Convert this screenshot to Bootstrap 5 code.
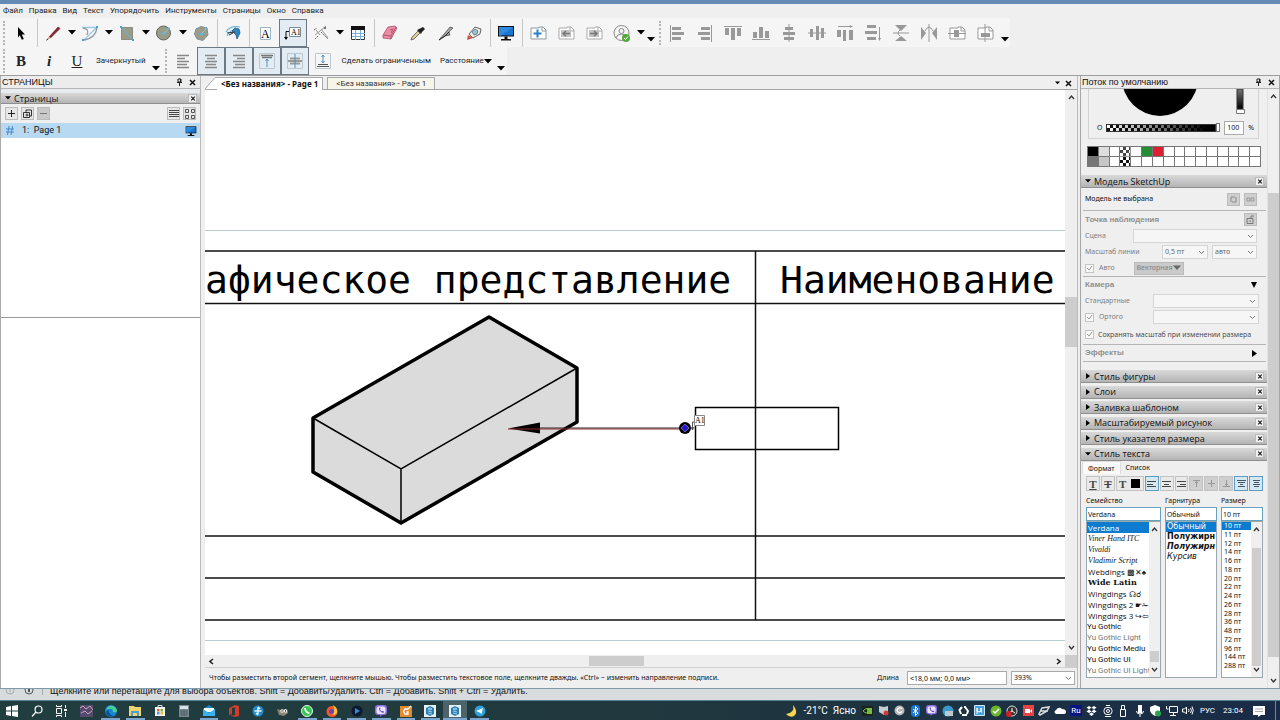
<!DOCTYPE html>
<html lang="ru">
<head>
<meta charset="utf-8">
<meta name="viewport" content="width=device-width, initial-scale=1">
<title>LayOut</title>
<link href="https://cdn.jsdelivr.net/npm/bootstrap@5.3.0/dist/css/bootstrap.min.css" rel="stylesheet">
<script src="https://cdn.jsdelivr.net/npm/bootstrap@5.3.0/dist/js/bootstrap.bundle.min.js" defer></script>
<style>
  :root { --ui: Roboto, "Noto Sans", sans-serif; --panel: "Liberation Sans", Arial, sans-serif; --small: "Noto Sans", "Open Sans", sans-serif; }
  body { font: 8px/12px var(--ui); color: #111; background: #efefef; }
  svg { display: block; flex: none; }
  button, input, select { font: inherit; color: inherit; }
  .app-top { height: 4px; background: #658ab5; }
  .menus { height: 14px; gap: 6px; padding-left: 3px; }
  .menus a { color: #222; text-decoration: none; }
  .tools { height: 28px; }
  .tools.first { height: 29px; }
  .strip { background: #f5f5f5; height: 100%; display: flex; align-items: center; }
  .grip { width: 2px; height: 24px; margin: 0 2px 0 3px; border-left: 2px dotted #b5b5b5; }
  .tool { width: 28px; height: 28px; padding: 0; border: 0; border-radius: 0; display: flex; align-items: center; justify-content: center; flex: none; --bs-btn-line-height: 1; }
  .tool.on { background: #e3ecf3; border: 1px solid #6c7884; }
  .drop { width: 9px; }
  .more { width: 11px; padding-top: 14px; }
  .word { width: auto; font: 8px/12px var(--ui); padding: 0 5px; }
  .vline { width: 1px; height: 28px; margin: 0 1px 0 2px; background: #c6c6c6; flex: none; }
  .serif { font: 15px/24px "Liberation Serif", serif; color: #222; }
  .work { border-top: 1px solid #9d9d9d; border-bottom: 1px solid #7e9bab; min-height: 0; }
  .left { width: 201px; border-right: 1px solid #bbb; border-left: 1px solid #aaa; background: #fff; }
  .right { width: 200px; border: 1px solid #a5a5a5; border-width: 0 1px; background: #efefef; }
  .cap { height: 13px; font: 9px/13px var(--panel); background: #ececec; border-bottom: 1px solid #b5b5b5; padding: 0 3px 0 1px; }
  .bar { height: 13px; font: 9px/13px "Open Sans", var(--panel); background: linear-gradient(#d9d9d9, #b4b4b4); border-bottom: 1px solid #8f8f8f; padding: 0 3px 0 4px; display: flex; align-items: center; gap: 3px; }
  .bar svg { width: 6px; }
  .bar .x { margin-left: auto; }
  .x { width: 9px; height: 9px; padding: 0; border: 1px solid #bbb; border-radius: 0; background: #efefef; display: flex; align-items: center; justify-content: center; }
  .bare { border: 0; background: none; padding: 0; width: 9px; height: 9px; display: flex; align-items: center; justify-content: center; }
  .mini { width: 13px; height: 13px; padding: 0; border: 1px solid #bbb; border-radius: 0; background: #e6e6e6; display: flex; align-items: center; justify-content: center; flex: none; }
  .pages { border-bottom: 1px solid #999; height: 195px; }
  .pagerow { background: #b7daf2; height: 15px; width: 100%; border: 0; font: 9px/15px var(--ui); padding: 0 3px 0 5px; text-align: left; }
  .tabs { height: 14px; border-bottom: 1px solid #a5a5a5; background: #efefef; }
  .tabs button { border: 1px solid #a9a9a9; border-bottom: 0; height: 12px; line-height: 12px; padding: 0 4px; background: #f5f5ea; color: #333; }
  .tabs button.on { background: #fff; font: 700 8px/12px "Noto Sans", var(--ui); color: #111; border-left: 0; margin-bottom: -1px; height: 13px; }
  .canvas { background: #fff; min-height: 0; overflow: hidden; }
  .canvas text { font: 38px "DejaVu Sans Mono", monospace; }
  .vbar { width: 12px; background: #efefef; display: flex; flex-direction: column; align-items: center; flex: none; }
  .thumb { background: #cdcdcd; }
  .hbar { height: 12px; background: #efefef; display: flex; align-items: center; }
  .hint { height: 21px; border-top: 1px solid #cfcfcf; font: 7px/20px var(--small); padding: 0 2px 0 4px; }
  .field { border: 1px solid #aaa; border-radius: 0; background-color: #fff; height: 14px; padding: 0 2px; min-width: 0; font: 7px/12px var(--small); appearance: none; }
  select.field { background: #fff url("data:image/svg+xml,%3Csvg xmlns='http://www.w3.org/2000/svg' width='7' height='5'%3E%3Cpath d='M1 1l2.500 2.500L6 1' fill='none' stroke='%23777'/%3E%3C/svg%3E") no-repeat right 2px center; }
  .dim select.field { border-color: #d5d5d5; background-color: #f6f6f6; color: #666; }
  .dim { color: #808080; }
  .dim b { font: 700 8px/12px var(--panel); color: #909090; }
  .tray-body { overflow: hidden; min-height: 0; font: 7px/12px var(--small); }
  .colorbox { height: 50px; margin: 0 8px 0 7px; border: 1px solid #d2d2d2; border-top: 0; }
  .check { background: repeating-conic-gradient(#111 0 25%, #fff 0 50%) 0 0/6px 6px; }
  .alpha { height: 8px; border: 1px solid #333; background: linear-gradient(90deg, transparent, #000 92%), repeating-conic-gradient(#111 0 25%, #fff 0 50%) 0 0/6px 6px; }
  .swatches { display: grid; grid-template-columns: repeat(16, 1fr); margin: 7px 6px 0 6px; border: 1px solid #777; border-width: 1px 0 0 1px; }
  .swatches i { height: 10px; border: 1px solid #777; border-width: 0 1px 1px 0; background-color: #fff; }
  .prop { display: flex; align-items: center; height: 16px; padding: 0 10px 0 4px; }
  .rule { border-top: 1px solid #b5b5b5; margin: 0 1px 0 2px; }
  .tick { appearance: none; width: 9px; height: 9px; margin: 0 5px 0 0; flex: none; border: 1px solid #c5c5c5; background: #f8f8f8 url("data:image/svg+xml,%3Csvg xmlns='http://www.w3.org/2000/svg' width='7' height='7'%3E%3Cpath d='M1 3l2 2 3-4' fill='none' stroke='%23999'/%3E%3C/svg%3E") center no-repeat; }
  .bars { height: 91px; }
  .sheet { margin: 0 4px 0 1px; }
  .sheet-tabs button { border: 0; background: none; height: 13px; line-height: 13px; padding: 0 5px; }
  .sheet-tabs button.on { background: #fafafa; border: 1px solid #ddd; border-bottom: 0; }
  .fmt { display: flex; gap: 1px; height: 15px; margin: 2px 0 0 4px; }
  .fmt button { width: 14px; height: 15px; padding: 0; border: 1px solid #c2c2c2; background: #e9e9e9; font: 700 11px/12px "Liberation Serif", serif; color: #444; display: flex; align-items: center; justify-content: center; }
  .fmt button.on { border-color: #5c9cc5; background: #d5e7f3; }
  .fmt button.off { background: #cfcfcf; color: #999; }
  .cols { display: grid; grid-template-columns: 75px 52px 42px; gap: 4px; margin-left: 4px; }
  .cols input { width: 100%; height: 14px; border-color: #66a3bb; padding: 0 1px; }
  .box { height: 157px; border: 1px solid #9aa7ad; background: #fff; overflow: hidden; display: flex; }
  .box ul { margin: 0; padding: 0; list-style: none; overflow: hidden; flex: 1; white-space: nowrap; }
  .fam li { height: 11px; font: 8px/11px "Open Sans", var(--ui); padding-left: 1px; overflow: hidden; }
  .fam li.yu { font-family: var(--ui); padding-left: 0; }
  .fam li.hand { font-family: "Liberation Serif", serif; font-style: italic; }
  .sty li { height: 10px; font: 8px/10px "DejaVu Sans", sans-serif; padding-left: 1px; }
  .siz { display: flex; flex-direction: column; justify-content: space-between; height: 148px; }
  .siz li { padding-left: 2px; line-height: 8px; }
  .box li.on { background: #0c7bd0; color: #fff; }
  .box .vbar { width: 11px; }
  .under { height: 11px; background: #d9dcde; overflow: hidden; font: 9px/11px var(--panel); white-space: nowrap; }
  .under p { margin: -3px 0 0; }
  .task { height: 20px; background: linear-gradient(90deg, #213e3f, #20383e 50%, #192b47); color: #fff; border-top: 1px solid #5b7f93; }
  .apps { display: grid; grid-template-columns: repeat(20, 1fr); width: 492px; }
  .apps button, .tray button { border: 0; background: none; padding: 0; display: flex; align-items: center; justify-content: center; color: #fff; }
  .apps button.run { box-shadow: inset 0 -2px #7ba4ce; margin: 0 3px; }
  .apps button.now { background: #4c6468; margin: 0; }
  .tray { font: 10px/18px var(--ui); }
  .tray button { width: 16px; }
  .clock { font-size: 8px; }
</style>
</head>
<body class="vh-100 d-flex flex-column overflow-hidden">
<svg width="0" height="0" class="position-absolute" aria-hidden="true">
  <defs>
    <symbol id="tri" viewBox="0 0 8 5"><path d="M0 0h8L4 4.500z"/></symbol>
    <symbol id="cross" viewBox="0 0 7 7"><path d="M1 1l5 5M6 1L1 6" stroke="#111" stroke-width="1.500"/></symbol>
    <symbol id="pin" viewBox="0 0 7 8"><path d="M2 1h3v3H2zM1 4.500h5M3.500 5v3M4.500 1v3" fill="none" stroke="#222"/></symbol>
    <symbol id="up" viewBox="0 0 7 7"><path d="M1 5l2.500-3L6 5" fill="none" stroke="#333" stroke-width="1.300"/></symbol>
    <symbol id="down" viewBox="0 0 7 7"><path d="M1 2l2.500 3L6 2" fill="none" stroke="#333" stroke-width="1.300"/></symbol>
    <symbol id="screen" viewBox="0 0 18 18"><path d="M1 2h16v10.500H1z" fill="#111"/><path d="M2 3h14v8.500H2z" fill="#1c74cc"/><path d="M2 3h14L4 11.500H2z" fill="#2f8ae0"/><path d="M7.500 12.500h3V15H14v1.500H4V15h3.500z" fill="#111"/></symbol>
    <symbol id="sheet" viewBox="0 0 18 18"><path d="M2 4h8v-1h4l3 3v9H2z" fill="#fff" stroke="currentColor"/><path d="M13 3v4h4" fill="none" stroke="currentColor"/></symbol>
    <symbol id="sk" viewBox="0 0 12 12"><path d="M0 0h12v12H0z" fill="#e6f1f8"/><path d="M6 1l4 2v6l-4 2-4-2V3z" fill="#2f7fb3"/><path d="M4 4l2-1 2 1-2 1zM4 6l4 1M4 8l4 1" stroke="#9cd0ee" fill="none"/></symbol>
    <symbol id="viber" viewBox="0 0 12 12"><path d="M3 0h6q3 0 3 3v4q0 3-3 3H7l-2 2v-2H3Q0 10 0 7V3q0-3 3-3z" fill="#8a6fe0"/><path d="M1.500 4q0-2.500 2.500-2.500h4q2.500 0 2.500 2.500v2.500Q10.500 9 8 9H4Q1.500 9 1.500 6.500z" fill="#e9e3fb"/><path d="M4 3q0 4 4.500 5l.5-1.500-1.500-.5-.5.5Q5.500 6 5 4.500l.5-.5-.5-1.500z" fill="#5b3fbd"/></symbol>
  </defs>
</svg>

<div class="app-top"></div>
<nav class="menus d-flex align-items-center" aria-label="Меню">
  <a href="#">Файл</a><a href="#">Правка</a><a href="#">Вид</a><a href="#">Текст</a><a href="#">Упорядочить</a><a href="#">Инструменты</a><a href="#">Страницы</a><a href="#">Окно</a><a href="#">Справка</a>
</nav>

<div class="tools first d-flex" role="toolbar" aria-label="Основные инструменты">
  <div class="strip">
    <span class="grip"></span>
    <button class="btn tool" aria-label="Выбор"><svg width="18" height="18"><path d="M6 3l7 7.500H9.800l2 4.500-2 .8-2-4.500L6 13.500z"/></svg></button>
    <span class="vline"></span>
    <button class="btn tool" aria-label="Линия"><svg width="18" height="18"><path d="M3 16l2-4 3 1.500z" fill="#caa27c"/><path d="M5.500 12.500L14 3l2 1.500-9 9z" fill="#8d2230" stroke="#5f1822" stroke-width=".6"/><path d="M2 17l1.200-2.500 1 .8z" fill="#222"/></svg></button>
    <button class="btn tool drop" aria-label="Виды линий"><svg width="8" height="5"><use href="#tri"/></svg></button>
    <button class="btn tool" aria-label="Дуга"><svg width="18" height="18" fill="none"><path d="M2 4L16 3Q16 14 3 16l2-4 4-1z" fill="#fafcfd"/><path d="M1 3.500h14M3 16L15 4" stroke="#9cc8e2" stroke-width="1.300"/><path d="M16 3Q15 14 3 16M2 4q7 1 4 7" stroke="#8b9aa3" stroke-width="1.300"/><path d="M1 15h2v2H1zM15 2h2v2h-2z" fill="#4ba0d4"/></svg></button>
    <button class="btn tool drop" aria-label="Виды дуг"><svg width="8" height="5"><use href="#tri"/></svg></button>
    <button class="btn tool" aria-label="Прямоугольник"><svg width="18" height="18"><path d="M3.500 3.500h11v12h-11z" fill="#9b9c88" stroke="#8b8d7e"/><path d="M4 3.500L14 15.500" stroke="#65b4e0"/><path d="M2 2h2v2H2zM14 15h2v2h-2z" fill="#4ba0d4"/></svg></button>
    <button class="btn tool drop" aria-label="Виды прямоугольников"><svg width="8" height="5"><use href="#tri"/></svg></button>
    <button class="btn tool" aria-label="Круг"><svg width="18" height="18"><circle cx="8.500" cy="9" r="7" fill="#9b9c88" stroke="#60686a"/><path d="M8.500 9.500L13.500 5" stroke="#8ccbea"/><path d="M7 8.500h3v2H7zM13 3.500h2v2h-2z" fill="#65b4e0"/></svg></button>
    <button class="btn tool drop" aria-label="Виды кругов"><svg width="8" height="5"><use href="#tri"/></svg></button>
    <button class="btn tool" aria-label="Многоугольник"><svg width="18" height="18"><path d="M4 5l5-2.500 6 1.500 1 7-5 5.500-6-1.500-2.500-5z" fill="#9b9c88" stroke="#7f8f9c"/><path d="M9 10l5-5" stroke="#8ccbea"/><path d="M8 9h3v2H8zM13 3h2v2h-2z" fill="#65b4e0"/></svg></button>
    <span class="vline"></span>
    <button class="btn tool" aria-label="Смещение"><svg width="18" height="18" fill="none"><path d="M2 8Q6 1 16 3M3 12Q6 6 11 6" stroke="#6fb4de" stroke-width="1.200"/><path d="M8 7l3-3 4 1 1 4-3 6-1-4z" fill="#2d86c2" stroke="#245a80" stroke-width=".8"/><path d="M3 9l8-1M5 11l4-2" stroke="#333"/></svg></button>
    <span class="vline"></span>
    <button class="btn tool" aria-label="Текст"><svg width="18" height="18"><path d="M4.500 3.500h10v12h-10z" fill="#fff" stroke="#9cb5c4"/><text x="5" y="14" font-size="12" font-family="Liberation Serif">A</text></svg></button>
    <button class="btn tool on" aria-label="Подпись"><svg width="18" height="18"><path d="M5.500 3.500h11v9h-11z" fill="#fff" stroke="#788b98"/><text x="7" y="11" font-size="8" font-family="Liberation Serif">A1</text><path d="M5 7.500H2V14" fill="none" stroke="#111"/><path d="M0 13h4l-2 3z"/></svg></button>
    <button class="btn tool" aria-label="Размер"><svg width="18" height="18" fill="none"><path d="M3 11L14 2M4 6l4 5M9 5l7 9" stroke="#999"/><path d="M2 6l3-2M6 12l-3 3M9 8l7 7" stroke="#666" stroke-dasharray="2 1"/><circle cx="13" cy="4" r="1.200" fill="#777"/></svg></button>
    <button class="btn tool drop" aria-label="Виды размеров"><svg width="8" height="5"><use href="#tri"/></svg></button>
    <button class="btn tool" aria-label="Таблица"><svg width="18" height="18"><path d="M2.500 2.500h13v13h-13z" fill="#fff" stroke="#333"/><path d="M2 2h14v4H2z" fill="#111"/><path d="M6.500 6v10M11.500 6v10M3 9.500h13M3 12.500h13" stroke="#77b0dc"/></svg></button>
    <span class="vline"></span>
    <button class="btn tool" aria-label="Ластик"><svg width="18" height="18"><path d="M7 3l7-1 2 2-6 11-8-1v-3z" fill="#ee8ca6" stroke="#98465c" stroke-width=".7"/><path d="M2 11l8 1 5-9M10 12v3M9 6l3-1-2 4" fill="none" stroke="#b65471"/></svg></button>
    <button class="btn tool" aria-label="Пипетка"><svg width="18" height="18"><path d="M2 16l1-3 6-6 2 2-6 6z" fill="#d8cf9a" stroke="#555" stroke-width=".8"/><path d="M8 6l4 4 1-2 3-3-2-2-4 2z" fill="#222"/></svg></button>
    <button class="btn tool" aria-label="Разделить"><svg width="18" height="18"><path d="M2 16L13 3l3 1-4 4 1 3-5 1z" fill="#a5a5a5" stroke="#444" stroke-width=".7"/><path d="M2 16l6-4 4-4" fill="none" stroke="#222"/></svg></button>
    <button class="btn tool" aria-label="Соединить"><svg width="18" height="18"><path d="M4 10l6-7 6 2-1 5-7 4z" fill="#f0e9dc" stroke="#444" stroke-width=".8"/><path d="M7 8l3-3 3 2-1 3-3 1z" fill="#8ec7dc" stroke="#567" stroke-width=".7"/><path d="M2 16l1-5 5 3z" fill="#c75340"/></svg></button>
    <span class="vline"></span>
    <button class="btn tool" aria-label="Презентация"><svg width="18" height="18"><use href="#screen"/></svg></button>
    <span class="vline"></span>
    <button class="btn tool" aria-label="Добавить страницу" style="color:#8d9aa2"><svg width="18" height="18"><use href="#sheet"/><path d="M8.500 5.500v8M4.500 9.500h8" stroke="#2b7fc9" stroke-width="2"/></svg></button>
    <button class="btn tool" aria-label="Предыдущая страница" style="color:#aaa"><svg width="18" height="18"><use href="#sheet"/><path d="M4 6h10v7H4z" fill="#c2c2c2"/><path d="M13 9.500H6M9 7L6 9.500 9 12" fill="none" stroke="#777" stroke-width="1.500"/></svg></button>
    <button class="btn tool" aria-label="Следующая страница" style="color:#aaa"><svg width="18" height="18"><use href="#sheet"/><path d="M4 6h10v7H4z" fill="#c2c2c2"/><path d="M5 9.500h7M9 7l3 2.500L9 12" fill="none" stroke="#777" stroke-width="1.500"/></svg></button>
    <button class="btn tool" aria-label="Учётная запись"><svg width="18" height="18"><g fill="none" stroke="#888"><circle cx="8.500" cy="9" r="7.500"/><circle cx="8.500" cy="7" r="2.500"/><path d="M3 14q1-4 5.500-4t5.500 4"/></g><circle cx="13" cy="14" r="4" fill="#56a83c"/><path d="M11 14l1.500 1.500 2.500-3" fill="none" stroke="#fff"/></svg></button>
    <button class="btn tool drop" aria-label="Меню записи"><svg width="8" height="5"><use href="#tri"/></svg></button>
    <button class="btn tool more" aria-label="Ещё"><svg width="8" height="5"><use href="#tri"/></svg></button>
    <span class="grip"></span>
    <button class="btn tool" aria-label="По левому краю"><svg width="18" height="18" fill="#999"><path d="M2 1h1v17H2zM4 3h9v3H4zM4 8h12v3H4zM4 13h9v3H4z"/></svg></button>
    <button class="btn tool" aria-label="По правому краю"><svg width="18" height="18" fill="#999"><path d="M15 1h1v17h-1zM5 3h9v3H5zM2 8h12v3H2zM5 13h9v3H5z"/></svg></button>
    <button class="btn tool" aria-label="По верху"><svg width="18" height="18" fill="#999"><path d="M0 2h18v1H0zM1 4h4v7H1zM7 4h4v12H7zM13 4h4v8h-4z"/></svg></button>
    <button class="btn tool" aria-label="По низу"><svg width="18" height="18" fill="#999"><path d="M0 15h18v1H0zM1 8h4v6H1zM7 3h4v11H7zM13 7h4v7h-4z"/></svg></button>
    <button class="btn tool" aria-label="По центру"><svg width="18" height="18" fill="#999"><path d="M8.500 0h1v18h-1zM5 3h8v3H5zM3 8h12v3H3zM4 13h10v3H4z"/></svg></button>
    <button class="btn tool" aria-label="По середине"><svg width="18" height="18" fill="#999"><path d="M0 8.500h18v1H0zM2 5h3v8H2zM8 2h3v14H8zM13 4h3v10h-3z"/></svg></button>
    <button class="btn tool" aria-label="Распределить по горизонтали"><svg width="18" height="18" fill="#999"><path d="M2 2h12V1l3 1.500L14 4V3H2zM1 6h4v7H1zM7 6h3v11H7zM13 6h4v10h-4z"/></svg></button>
    <button class="btn tool" aria-label="Распределить по вертикали"><svg width="18" height="18" fill="#999"><path d="M3 1h9v3H3zM1 7h12v3H1zM3 13h9v3H3zM15 3h1v11h1l-1.500 3-1.500-3h1z"/></svg></button>
    <button class="btn tool" aria-label="Отразить по вертикали"><svg width="18" height="18" fill="#999"><path d="M3 1h12l-6 6zM3 17h12l-6-5zM1 8.500h16v1H1z"/><path d="M8 6q-4 3 0 6" fill="none" stroke="#999"/></svg></button>
    <button class="btn tool" aria-label="Отразить по горизонтали"><svg width="18" height="18" fill="#999"><path d="M1 3v13l5-7zM17 3v13l-5-7zM8.500 0h1v18h-1z"/><path d="M5 7q4-8 8 0" fill="none" stroke="#999"/></svg></button>
    <button class="btn tool" aria-label="Центр по вертикали" style="color:#999"><svg width="18" height="18"><use href="#sheet"/><path d="M6 6h5v7H6zM0 9h18v1H0z" fill="#999"/></svg></button>
    <button class="btn tool" aria-label="Центр по горизонтали" style="color:#999"><svg width="18" height="18"><use href="#sheet"/><path d="M5 9h9v4H5zM8.500 0h1v18h-1z" fill="#999"/></svg></button>
    <button class="btn tool more" aria-label="Ещё"><svg width="8" height="5"><use href="#tri"/></svg></button>
  </div>
</div>

<div class="tools d-flex" role="toolbar" aria-label="Форматирование">
  <div class="strip">
    <span class="grip"></span>
    <button class="btn tool serif fw-bold">B</button>
    <button class="btn tool serif fw-bold fst-italic">i</button>
    <button class="btn tool serif text-decoration-underline">U</button>
    <button class="btn tool word">Зачеркнутый</button>
    <button class="btn tool more" aria-label="Ещё"><svg width="8" height="5"><use href="#tri"/></svg></button>
    <span class="grip"></span>
    <button class="btn tool" aria-label="Слева"><svg width="18" height="18" stroke="#888" stroke-width="1.300"><path d="M3 3.500h12M3 6.500h8M3 9.500h12M3 12.500h10M3 15.500h12"/></svg></button>
    <button class="btn tool on" aria-label="По центру текста"><svg width="18" height="18" stroke="#888" stroke-width="1.300"><path d="M3 3.500h12M5 6.500h8M3 9.500h12M4 12.500h10M3 15.500h12"/></svg></button>
    <button class="btn tool on" aria-label="Справа"><svg width="18" height="18" stroke="#888" stroke-width="1.300"><path d="M3 3.500h12M7 6.500h8M3 9.500h12M5 12.500h10M3 15.500h12"/></svg></button>
    <button class="btn tool on" aria-label="Верх текста"><svg width="18" height="18" fill="none" stroke="#999"><path d="M1.500 1.500h15v15h-15z" stroke="#bcc8d0"/><path d="M3 3.500h12M4 5.500h10" stroke-width="1.300" stroke="#777"/><path d="M9 7v8M7.500 9L9 7l1.500 2" stroke="#4d92bd"/></svg></button>
    <button class="btn tool on" aria-label="Середина текста"><svg width="18" height="18" fill="none" stroke="#999"><path d="M1.500 1.500h15v15h-15z" stroke="#bcc8d0"/><path d="M2 9h14M4 6.500h10M4 11.500h10" stroke-width="2"/><path d="M9 2v14" stroke="#4d92bd"/></svg></button>
    <button class="btn tool" aria-label="Низ текста"><svg width="18" height="18" fill="none"><path d="M1.500 1.500h15v15h-15z" stroke="#bcc8d0"/><path d="M3 14.500h12M4 12.500h10" stroke="#555"/><path d="M9 3v8M7.500 9L9 11l1.500-2M7.500 5L9 3l1.500 2" stroke="#4d92bd"/></svg></button>
    <button class="btn tool word">Сделать ограниченным</button>
    <button class="btn tool word pe-0 ps-1">Расстояние <svg width="8" height="5"><use href="#tri"/></svg></button>
    <button class="btn tool more ms-1" aria-label="Ещё"><svg width="8" height="5"><use href="#tri"/></svg></button>
  </div>
</div>

<main class="work flex-grow-1 d-flex">
  <aside class="left flex-shrink-0">
    <div class="cap d-flex align-items-center gap-1"><span class="me-auto">СТРАНИЦЫ</span><button class="bare" aria-label="Закрепить"><svg width="7" height="8"><use href="#pin"/></svg></button><button class="bare" aria-label="Закрыть"><svg width="7" height="7"><use href="#cross"/></svg></button></div>
    <div class="pt-1 bg-body-secondary"><div class="bar" style="height:11px"><svg width="6" height="4"><use href="#tri"/></svg><span>Страницы</span><button class="x" aria-label="Закрыть"><svg width="5" height="5"><use href="#cross"/></svg></button></div></div>
    <div class="d-flex align-items-center px-1" style="height:19px;gap:3px;background:#efefef">
      <button class="mini" aria-label="Добавить"><svg width="7" height="7"><path d="M3.500 0v7M0 3.500h7" stroke="#222"/></svg></button>
      <button class="mini" aria-label="Дублировать"><svg width="9" height="9" fill="none" stroke="#333"><path d="M.5 3.500h6v5h-6zM3 3V1h5.500v6H7M4 4.500v3M2.500 6h3"/></svg></button>
      <button class="mini me-auto" style="background:#c9c9c9" aria-label="Удалить"><svg width="7" height="7"><path d="M0 3.500h7" stroke="#777"/></svg></button>
      <button class="mini" aria-label="Список"><svg width="10" height="9" stroke="#444"><path d="M0 1.500h10M0 3.500h10M0 5.500h10M0 7.500h10"/></svg></button>
      <button class="mini" aria-label="Значки"><svg width="10" height="10" fill="none" stroke="#555"><path d="M.5.500h3v3h-3zM6.500.500h3v3h-3zM.5 6.500h3v3h-3zM6.500 6.500h3v3h-3z"/></svg></button>
    </div>
    <div class="pages bg-white">
      <button class="pagerow d-flex align-items-center"><svg width="8" height="9" fill="none" stroke="#4787c7"><path d="M3 0L1.500 9M6.500 0L5 9M0 3h8M0 6h8"/></svg><span class="ms-2">1:&nbsp; Page 1</span><svg class="ms-auto" width="12" height="12"><use href="#screen"/></svg></button>
    </div>
  </aside>
  <div style="width:4px"></div>

  <section class="flex-grow-1 d-flex flex-column" style="min-width:0">
    <div class="tabs d-flex align-items-end">
      <svg width="12" height="12"><path d="M0 12L10 .5h2V12z" fill="#fff"/><path d="M0 12L10 .5h2" fill="none" stroke="#aaa"/></svg><button class="on">&lt;Без названия&gt; - Page 1</button><button class="ms-1 px-2">&lt;Без названия&gt; - Page 1</button>
      <span class="ms-auto d-flex align-items-center gap-1 pe-1"><svg width="5" height="4"><use href="#tri"/></svg><button class="bare border-0 p-0 bg-transparent" aria-label="Закрыть вкладку"><svg width="7" height="7"><use href="#cross"/></svg></button></span>
    </div>
    <div class="flex-grow-1 d-flex" style="min-height:0">
      <div class="canvas flex-grow-1">
        <svg width="100%" height="100%" role="img" aria-label="Чертёж">
          <g fill="none" stroke="#b7cdd3"><path d="M0 140.500h2000M0 550.500h2000"/></g>
          <g stroke="#111" stroke-width="2"><path d="M0 161h2000M0 446h2000M0 488h2000M0 530h2000" stroke-width="1.700"/><path d="M0 213.500h2000" stroke-width="1.500"/></g>
          <text x="0" y="203">афическое представление</text>
          <text x="575" y="203">Наименование</text>
          <path d="M284 227l88 51v54L196 433l-88-51v-54z" fill="#dbdbdb" stroke="#000" stroke-width="3.500" stroke-linejoin="round"/>
          <path d="M108 328l88 51 176-101M196 379v54" fill="none" stroke="#000" stroke-width="1.500"/>
          <path d="M490.500 317.500h143v42h-143z" fill="none" stroke="#000" stroke-width="1.500"/>
          <path d="M550.500 161v369" stroke="#111" stroke-width="1.500"/>
          <path d="M303 338.500l32-6v11z"/><path d="M335 338h145" stroke="#222"/><path d="M303 339h177" stroke="#8c2a2f"/>
          <circle cx="480" cy="338" r="6"/><path d="M480 334l4 4-4 4-4-4z" fill="#2a15c4" stroke="#8588cc" stroke-width=".7"/>
          <path d="M487.500 340v-8h3M486 337l1.500 3 1.500-3" fill="none" stroke="#555"/>
          <path d="M489.500 325.500h10v10h-10z" fill="#fff" stroke="#888"/>
          <text x="490" y="333" style="font:8px 'Liberation Serif',serif">A1</text>
        </svg>
      </div>
      <div class="vbar py-1"><svg width="7" height="7"><use href="#up"/></svg><span class="thumb w-100" style="height:50px;margin-top:196px"></span><svg class="mt-auto" width="7" height="7"><use href="#down"/></svg></div>
    </div>
    <div class="hbar"><svg class="ms-1" width="5" height="7"><path d="M4 1L1 3.500 4 6" fill="none" stroke="#222" stroke-width="1.500"/></svg><span class="thumb" style="width:55px;height:10px;margin-left:43%"></span><svg class="ms-auto me-1" width="5" height="7"><path d="M1 1l3 2.500L1 6" fill="none" stroke="#222" stroke-width="1.500"/></svg><span class="thumb" style="width:12px;height:12px"></span></div>
    <div class="hint d-flex align-items-center"><span class="me-auto text-nowrap">Чтобы разместить второй сегмент, щелкните мышью. Чтобы разместить текстовое поле, щелкните дважды. «Ctrl» − изменить направление подписи.</span><label for="len" class="me-2">Длина</label><input id="len" class="field me-1" style="width:100px" value="&lt;18,0 мм; 0,0 мм&gt;"><select class="field" style="width:64px" aria-label="Масштаб"><option>393%</option></select></div>
  </section>
  <div style="width:3px;border-left:1px solid #bbb"></div>

  <aside class="right flex-shrink-0 d-flex flex-column">
    <div class="cap d-flex align-items-center gap-1"><span class="me-auto">Поток по умолчанию</span><button class="bare" aria-label="Закрепить"><svg width="7" height="8"><use href="#pin"/></svg></button><button class="bare" aria-label="Закрыть"><svg width="7" height="7"><use href="#cross"/></svg></button></div>
    <div class="d-flex flex-grow-1" style="min-height:0">
      <div class="tray-body flex-grow-1">
        <div class="colorbox">
          <div class="d-flex" style="height:32px;padding-left:31px"><svg width="80" height="28"><circle cx="40" cy="-11" r="38"/></svg><svg class="ms-auto" style="margin-right:12px" width="12" height="26"><defs><linearGradient id="shade" x2="0" y2="1"><stop stop-color="#777"/><stop offset="1"/></linearGradient></defs><path d="M3 0h6v20H3z" fill="url(#shade)" stroke="#333"/><path d="M2.500 20.500h8v4h-8z" fill="#fff" stroke="#777"/></svg></div>
          <div class="d-flex align-items-center" style="height:13px;padding:0 4px 0 8px"><label for="alpha" class="me-1">O</label><span class="alpha flex-grow-1"></span><span style="width:4px;height:9px;border:1px solid #777;background:#fff"></span><input id="alpha" class="field ms-1 me-1" style="width:20px" value="100"><span>%</span></div>
        </div>
        <div class="swatches">
          <i style="background:#000"></i><i style="background:#ddd"></i><i></i><i class="check opacity-75"></i><i></i><i style="background:#278d35"></i><i style="background:#dc2030"></i><i></i><i></i><i></i><i></i><i></i><i></i><i></i><i></i><i></i>
          <i style="background:#777"></i><i style="background:#c6c6c6"></i><i></i><i class="check"></i><i></i><i></i><i></i><i></i><i></i><i></i><i></i><i></i><i></i><i></i><i></i><i></i>
        </div>
        <div class="bar mt-2"><svg width="6" height="4"><use href="#tri"/></svg><span>Модель SketchUp</span><button class="x" aria-label="Закрыть"><svg width="5" height="5"><use href="#cross"/></svg></button></div>
        <div class="prop" style="height:22px"><span class="me-auto">Модель не выбрана</span><button class="mini me-1" style="background:#cfcfcf" aria-label="Обновить"><svg width="9" height="9" fill="none" stroke="#888"><path d="M2 7V2h4M7 2v5H3"/></svg></button><button class="mini" style="background:#cfcfcf" aria-label="Связь"><svg width="9" height="5" fill="none" stroke="#999"><path d="M1 1h3v3H1zM5 1h3v3H5z"/></svg></button></div>
        <div class="rule"></div>
        <div class="dim">
          <div class="prop" style="height:17px"><b class="me-auto">Точка наблюдения</b><button class="mini" style="background:#cfcfcf" aria-label="Сбросить"><svg width="9" height="9" fill="none" stroke="#777"><path d="M1 3.500h6v5H1zM4 5v2M5 3V1h3"/></svg></button></div>
          <div class="prop"><label for="scene" style="width:48px">Сцена</label><select id="scene" class="field flex-grow-1"></select></div>
          <div class="prop"><label for="lw" class="text-nowrap" style="width:77px">Масштаб линии</label><select id="lw" class="field me-1" style="width:46px"><option>0,5 пт</option></select><select class="field flex-grow-1" aria-label="Режим"><option>авто</option></select></div>
          <div class="prop"><input class="tick" type="checkbox" id="auto" checked><label for="auto" style="width:35px">Авто</label><button class="mini px-1" style="width:50px;background:#cacaca;white-space:nowrap;gap:1px">Векторная <svg width="8" height="6" fill="#666"><use href="#tri"/></svg></button></div>
          <div class="rule"></div>
          <div class="prop"><b class="me-auto">Камера</b><svg width="6" height="6"><path d="M0 0h6L3 6z"/></svg></div>
          <div class="prop pe-2"><label for="std" style="width:68px">Стандартные</label><select id="std" class="field flex-grow-1"></select></div>
          <div class="prop pe-2"><input class="tick" type="checkbox" id="ortho" checked><label for="ortho" style="width:54px">Ортого</label><select class="field flex-grow-1" aria-label="Орто"></select></div>
          <div class="prop text-dark-emphasis" style="height:19px"><input class="tick me-1" type="checkbox" id="keep" checked><label for="keep" class="text-nowrap">Сохранять масштаб при изменении размера</label></div>
          <div class="rule"></div>
          <div class="prop"><b class="me-auto">Эффекты</b><svg width="5" height="7"><path d="M0 0v7l5-3.500z"/></svg></div>
          <div class="rule"></div>
        </div>
        <div class="bars d-flex flex-column justify-content-between mt-2">
          <div class="bar"><svg width="6" height="6"><path d="M1 0v6l4-3z"/></svg><span>Стиль фигуры</span><button class="x" aria-label="Закрыть"><svg width="5" height="5"><use href="#cross"/></svg></button></div>
          <div class="bar"><svg width="6" height="6"><path d="M1 0v6l4-3z"/></svg><span>Слои</span><button class="x" aria-label="Закрыть"><svg width="5" height="5"><use href="#cross"/></svg></button></div>
          <div class="bar"><svg width="6" height="6"><path d="M1 0v6l4-3z"/></svg><span>Заливка шаблоном</span><button class="x" aria-label="Закрыть"><svg width="5" height="5"><use href="#cross"/></svg></button></div>
          <div class="bar"><svg width="6" height="6"><path d="M1 0v6l4-3z"/></svg><span>Масштабируемый рисунок</span><button class="x" aria-label="Закрыть"><svg width="5" height="5"><use href="#cross"/></svg></button></div>
          <div class="bar"><svg width="6" height="6"><path d="M1 0v6l4-3z"/></svg><span>Стиль указателя размера</span><button class="x" aria-label="Закрыть"><svg width="5" height="5"><use href="#cross"/></svg></button></div>
          <div class="bar"><svg width="6" height="4"><use href="#tri"/></svg><span>Стиль текста</span><button class="x" aria-label="Закрыть"><svg width="5" height="5"><use href="#cross"/></svg></button></div>
        </div>
        <div class="sheet">
          <div class="sheet-tabs d-flex"><button class="on">Формат</button><button>Список</button></div>
          <div class="fmt">
            <button class="text-decoration-underline">T</button><button class="text-decoration-line-through">T</button><button style="width:28px;gap:5px">T <svg width="9" height="9"><path d="M0 0h9v9H0z"/></svg></button>
            <button class="on" aria-label="Слева"><svg width="9" height="8" stroke="#444"><path d="M0 1.500h9M0 4.500h6M0 6.500h9"/></svg></button><button aria-label="Центр"><svg width="9" height="8" stroke="#444"><path d="M0 1.500h9M2 4.500h5M0 6.500h9"/></svg></button><button aria-label="Справа"><svg width="9" height="8" stroke="#444"><path d="M0 1.500h9M3 4.500h6M0 6.500h9"/></svg></button>
            <button class="off" aria-label="Верх"><svg width="9" height="9" stroke="#999"><path d="M1 1.500h7M4.500 2v6M3 3.500h3"/></svg></button><button class="off" aria-label="Середина"><svg width="9" height="9" stroke="#999"><path d="M1 4.500h7M4.500 1v7"/></svg></button><button class="off" aria-label="Низ"><svg width="9" height="9" stroke="#999"><path d="M1 7.500h7M4.500 1v6M3 5.500h3"/></svg></button>
            <button class="on" aria-label="Авто"><svg width="9" height="9" stroke="#456"><path d="M0 1.500h9M1 3.500h7M3 5.500h3M1 7.500h7"/></svg></button><button class="on" aria-label="Рамка"><svg width="9" height="9" stroke="#456"><path d="M1 1.500h7M2 3.500h5M1 5.500h7M2 7.500h5"/></svg></button>
          </div>
          <div class="cols mt-1">
            <div><label for="fam">Семейство</label><input id="fam" class="field d-block" value="Verdana">
              <div class="box"><ul class="fam">
                <li class="on">Verdana</li><li class="hand">Viner Hand ITC</li><li class="hand">Vivaldi</li><li class="hand">Vladimir Script</li><li>Webdings ▩✕♠</li><li style="font-family:'DejaVu Serif';font-weight:700">Wide Latin</li><li>Wingdings ☊☌</li><li>Wingdings 2 ☛✁</li><li>Wingdings 3 ↪⇦</li><li class="yu">Yu Gothic</li><li class="yu" style="color:#777">Yu Gothic Light</li><li class="yu">Yu Gothic Mediu</li><li class="yu">Yu Gothic UI</li><li class="yu" style="color:#777">Yu Gothic UI Light</li><li class="yu">Yu Gothic UI S</li>
              </ul><div class="vbar py-1"><svg width="7" height="7"><use href="#up"/></svg><span class="thumb mt-auto" style="width:9px;height:11px"></span><svg class="mt-1" width="7" height="7"><use href="#down"/></svg></div></div></div>
            <div><label for="face">Гарнитура</label><input id="face" class="field d-block" value="Обычный">
              <div class="box"><ul class="sty"><li class="on">Обычный</li><li class="fw-bold">Полужирн</li><li class="fw-bold fst-italic">Полужирн</li><li class="fst-italic">Курсив</li></ul></div></div>
            <div><label for="size">Размер</label><input id="size" class="field d-block" value="10 пт">
              <div class="box"><ul class="siz"><li class="on">10 пт</li><li>11 пт</li><li>12 пт</li><li>14 пт</li><li>16 пт</li><li>18 пт</li><li>20 пт</li><li>22 пт</li><li>24 пт</li><li>26 пт</li><li>28 пт</li><li>36 пт</li><li>48 пт</li><li>72 пт</li><li>96 пт</li><li>144 пт</li><li>288 пт</li></ul><div class="vbar py-1"><svg width="7" height="7"><use href="#up"/></svg><span class="thumb mt-auto" style="width:9px;height:118px"></span><svg width="7" height="7"><use href="#down"/></svg></div></div></div>
          </div>
        </div>
      </div>
      <div class="vbar pb-1 border-start"><svg class="mt-1" width="7" height="7"><use href="#up"/></svg><span class="thumb w-100" style="height:78%;margin-top:93px"></span><svg class="mt-auto" width="7" height="7"><use href="#down"/></svg></div>
    </div>
  </aside>
</main>

<div class="under d-flex"><svg width="50" height="11" fill="none" stroke="#555"><g stroke="#aaa"><circle cx="10" cy="1" r="4"/><path d="M10 0v3"/></g><circle cx="29" cy="1" r="4"/><path d="M29-1v4" stroke-width="2"/><path d="M42.500 0v6" stroke="#aaa"/></svg><p>Щелкните или перетащите для выбора объектов. Shift = Добавить/Удалить. Ctrl = Добавить. Shift + Ctrl = Удалить.</p></div>

<footer class="task d-flex">
  <div class="apps">
    <button aria-label="Пуск"><svg width="12" height="12" fill="#fff"><path d="M0 2l5-1v4.500H0zM6 1l6-1v5.500H6zM0 6.500h5V11l-5-1zM6 6.500h6V12l-6-1z"/></svg></button>
    <button aria-label="Поиск"><svg width="12" height="12" fill="none" stroke="#fff" stroke-width="1.200"><circle cx="7.500" cy="4.500" r="3.500"/><path d="M5 7l-4 4.500"/></svg></button>
    <button aria-label="Задачи"><svg width="12" height="12" fill="none" stroke="#fff"><path d="M1.500 3.500h5v5h-5zM1.500 0v1.500h5V0M1.500 12v-1.500h5V12M10.500 0v3M10.500 7v5"/><path d="M9 4h3v2H9z" fill="#fff" stroke="none"/></svg></button>
    <button aria-label="Игра"><svg width="13" height="12"><path d="M0 0h13v12H0z" fill="#544a70"/><path d="M0 3l3-2 3 3 4-3 3 4M1 8l4-2 3 3 4-3" stroke="#c9a5b4" fill="none"/></svg></button>
    <button class="run" aria-label="Edge"><svg width="12" height="12"><circle cx="6" cy="6" r="6" fill="#1687d3"/><path d="M1 5q2-5 7-4 4 2 4 5-1 2-4 1Q8 3 4 4 2 4 1 5z" fill="#49cf94"/><path d="M4 5q-1 5 5 6-7 2-8-4 1-2 3-2z" fill="#0d4f9c"/></svg></button>
    <button class="run" aria-label="Проводник"><svg width="12" height="11"><path d="M0 1h5l1 1h6v9H0z" fill="#f4d36b"/><path d="M2 6h8v5H8V8H4v3H2z" fill="#4b9fd8"/></svg></button>
    <button aria-label="Магазин"><svg width="12" height="12"><path d="M1 2h10v9H1z" fill="#f4f4f4"/><path d="M4 2V.500h4V2" fill="none" stroke="#ddd"/><path d="M3 4h2.500v2.500H3z" fill="#e35c3f"/><path d="M6.500 4H9v2.500H6.500z" fill="#77b83c"/><path d="M3 7h2.500v2.500H3z" fill="#3c9ddd"/><path d="M6.500 7H9v2.500H6.500z" fill="#f2b82f"/></svg></button>
    <button aria-label="Калькулятор"><svg width="10" height="12"><path d="M0 0h10v12H0z" fill="#7c8b93"/><path d="M1 1h8v3H1z" fill="#d4e1e8"/><path d="M1.500 6h7M1.500 8h7M1.500 10h7" stroke="#304752" stroke-dasharray="2 .6"/></svg></button>
    <button class="run" aria-label="Почта"><svg width="12" height="11"><path d="M0 4l6-4 6 4v7H0z" fill="#1784c7"/><path d="M1 3h10v4H1z" fill="#f4f9fc"/><path d="M0 4l6 4 6-4v7H0z" fill="#38b1ed"/></svg></button>
    <button aria-label="Office"><svg width="10" height="12"><path d="M0 3l6-3 4 1v10l-4 1-6-2 6 .5v-8L3 3v6L0 10z" fill="#d13c24"/></svg></button>
    <button aria-label="Сервис"><svg width="12" height="12"><circle cx="6" cy="6" r="5.500" fill="#228dcc"/><path d="M6 2.500v7M2.500 6h7M6 2l2 2M6 10L4 8" stroke="#e2f4fd" stroke-width="1.500"/></svg></button>
    <button aria-label="GIMP"><svg width="12" height="10"><path d="M0 3l3 1 7-1 1 4-4 3-5-1z" fill="#8c8575"/><circle cx="5" cy="5" r="1.700" fill="#fff"/><circle cx="8.500" cy="5" r="1.700" fill="#fff"/><circle cx="5" cy="5" r=".7"/><circle cx="8.500" cy="5" r=".7"/></svg></button>
    <button class="run" aria-label="WhatsApp"><svg width="12" height="12"><circle cx="6" cy="6" r="5.500" fill="#39c554" stroke="#e7f7ea"/><path d="M4 3q0 4 4.500 5.500" stroke="#fff" stroke-width="1.700" fill="none"/></svg></button>
    <button class="run" aria-label="Firefox"><svg width="12" height="12"><circle cx="6" cy="6.500" r="5.500" fill="#f1592a"/><path d="M7 0q5 3 4 8-2 3-5 1 4-1 1-9z" fill="#ffc52f"/><circle cx="5.500" cy="6.500" r="2.500" fill="#6a45b8"/></svg></button>
    <button class="run" aria-label="Плеер"><svg width="12" height="12"><circle cx="6" cy="6" r="5.500" fill="#0c1830"/><path d="M4 3l5 3-5 3z" fill="#3987d8"/></svg></button>
    <button class="run" aria-label="Viber"><svg width="12" height="12"><use href="#viber"/></svg></button>
    <button class="run" aria-label="Редактор"><svg width="12" height="12"><path d="M0 1h12v11H0z" fill="#e08b2d"/><path d="M8.500 4H5L3.500 6.500 5 9h3V7H6.500M8 4l3-3" fill="none" stroke="#fff" stroke-width="1.300"/></svg></button>
    <button class="run" aria-label="SketchUp"><svg width="12" height="12"><use href="#sk"/></svg></button>
    <button class="run now" aria-label="LayOut"><svg width="12" height="12"><use href="#sk"/></svg></button>
    <button class="run" aria-label="Telegram"><svg width="12" height="12"><circle cx="6" cy="6" r="5.500" fill="#2ea2dc"/><path d="M2 6l7-3-1.500 6-2-1.500z" fill="#fff"/></svg></button>
  </div>
  <div class="tray ms-auto d-flex align-items-center">
    <svg class="me-1" width="16" height="14"><path d="M9 1q2 8-7 9 4 4 8 2 5-4-1-11z" fill="#f6d84a"/></svg><span class="me-1">-21°C&nbsp; Ясно</span>
    <button aria-label="NVIDIA"><svg width="11" height="10"><path d="M0 0h11v10H0z" fill="#17251a"/><path d="M1 5q4-5 8 0-4 4-8 0z" fill="none" stroke="#7ab648"/><path d="M5 2h5v6H5z" fill="#7ab648"/></svg></button>
    <button aria-label="Защита"><svg width="11" height="11"><path d="M1 1l5 1 4-1v6l-4 3-5-3z" fill="#c9ccce"/><circle cx="8" cy="8" r="2.500" fill="#d33a3a"/></svg></button>
    <button aria-label="CCleaner"><svg width="11" height="11"><circle cx="5.500" cy="5.500" r="5" fill="#b7b7b7"/><path d="M8 3.500q-4-2-5 2 2 4 5 1" fill="none" stroke="#fff" stroke-width="1.300"/></svg></button>
    <button aria-label="Bluetooth"><svg width="9" height="12"><rect width="9" height="12" rx="4" fill="#1977d3"/><path d="M2 4l5 4-2.500 2.500v-9L7 4 2 8" fill="none" stroke="#fff"/></svg></button>
    <button aria-label="Viber"><svg width="11" height="11"><use href="#viber"/></svg></button>
    <button aria-label="Сеть"><svg width="12" height="12"><circle cx="6" cy="6" r="5.500" fill="#3d99c9"/><path d="M3 6h8v5H3z" fill="#bdc8cc"/></svg></button>
    <button aria-label="Облако"><svg width="11" height="12" fill="none" stroke="#fff" stroke-width="2"><path d="M3 9L1.500 5 4 2M7 2l3 4-1 3M4 10h5M6 2h2"/></svg></button>
    <button aria-label="uTorrent"><svg width="11" height="11"><path d="M.5.500h10v10H.500z" fill="#47a1dc" stroke="#cce8fa"/><path d="M3 9V3v3q2 2 4 0V3v4h1" fill="none" stroke="#fff"/></svg></button>
    <button aria-label="Готово"><svg width="12" height="12"><circle cx="6" cy="6" r="5.500" fill="#6cb62c"/><path d="M3 6l2 2 4-4" fill="none" stroke="#fff" stroke-width="1.500"/></svg></button>
    <button aria-label="Запись"><svg width="12" height="12"><circle cx="6" cy="6" r="5" fill="#333" stroke="#ddd"/><path d="M6 6V3M6 6l3 2M6 6L3 8" stroke="#fff"/><circle cx="3" cy="9" r="3" fill="#d51e26"/></svg></button>
    <button aria-label="Камера"><svg width="12" height="12"><path d="M1 0h11v11H1z" fill="#e84444"/><path d="M3 4h5v4H3zM8 6l2-2v4z" fill="#fff"/></svg></button>
    <button aria-label="Перо"><svg width="12" height="10" fill="none" stroke="#ddd"><path d="M1 8l3-6 7-1-2 4-7 4zM3 5l7 0" stroke-width="1.500"/></svg></button>
    <button aria-label="OneDrive"><svg width="12" height="8"><path d="M2 7q-3-2 0-4 3-4 6-1 4 0 4 3 0 2-2 2z" fill="#fff"/></svg></button>
    <button aria-label="Язык Ru" style="background:#0a1680;width:12px;margin:0 2px;height:11px;font-size:8px">Ru</button>
    <button aria-label="Dropbox"><svg width="11" height="10" fill="#fff"><path d="M3 0l2.500 1.500L3 3.500.500 1.500zM8 0l2.500 1.500L8 3.500 5.500 1.500zM3 3.500l2.500 2L3 7 .500 5.500zM8 3.500l2.500 2L8 7 5.500 5.500zM5.500 6.500L8 8 5.500 10 3 8z"/></svg></button>
    <button aria-label="Веб-камера"><svg width="10" height="12" fill="none" stroke="#fff"><rect x="1" y="2.500" width="8" height="7" rx="3"/><circle cx="5" cy="6" r="1.500"/><path d="M3 .5h4M2 11.500h6"/></svg></button>
    <button aria-label="USB"><svg width="9" height="12" fill="none" stroke="#fff"><path d="M1.500 4.500h5v7h-5zM2.500 4V.500h3V4"/></svg></button>
    <button aria-label="Микрофон"><svg width="8" height="12" fill="none" stroke="#fff"><rect x="2.500" y=".5" width="3" height="7" fill="#fff"/><path d="M.5 6q0 3 3.500 3t3.500-3M4 9v3"/></svg></button>
    <button aria-label="Безопасность"><svg width="11" height="12"><path d="M0 2l5-2 5 2v4q-1 3-5 5-4-2-5-5z" fill="#fff"/><circle cx="8" cy="8.500" r="3" fill="#2ca44b"/></svg></button>
    <button aria-label="Подключение"><svg width="12" height="11" fill="none" stroke="#fff"><path d="M3.500 1.500h8v6h-8zM7.500 8v2M4 10.500h6M.5 1v3h2"/></svg></button>
    <button aria-label="Звук"><svg width="12" height="11" fill="none" stroke="#fff"><path d="M.5 4h2l2-2v7l-2-2h-2zM6.500 4q1 1.500 0 3M8.500 3q2 2.500 0 5M10 1.500q2.500 4 0 8"/></svg></button>
    <span class="clock ms-1">РУС</span><span class="clock ms-2">23:04</span>
    <button class="mx-2" aria-label="Уведомления"><svg width="12" height="12"><path d="M0 1h12v9H8l-3 2v-2H0z" fill="#fff"/><path d="M2 4h8M2 6.500h8" stroke="#aaa"/></svg></button>
    <span class="border-start h-100 opacity-50 ps-1"></span>
  </div>
</footer>
</body>
</html>
